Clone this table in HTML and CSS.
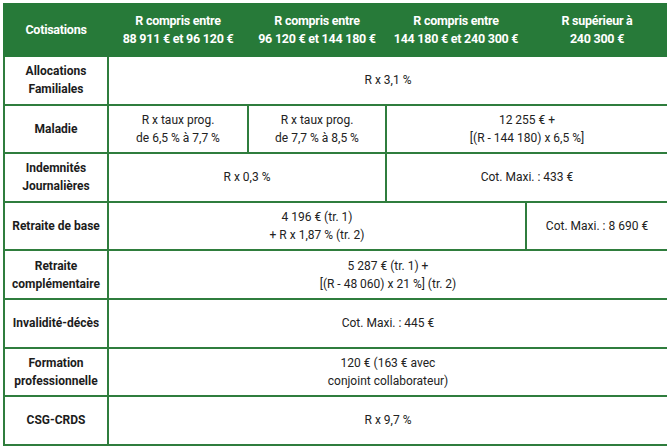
FILE: index.html
```html
<!DOCTYPE html>
<html lang="fr">
<head>
<meta charset="utf-8">
<link rel="stylesheet" href="styles.css">
</head>
<body>
<table class="grid">
  <colgroup>
    <col class="c1"><col class="c2"><col class="c3"><col class="c4"><col class="c5">
  </colgroup>
  <thead>
    <tr class="head">
      <th>Cotisations</th>
      <th>R compris entre<br>88 911 € et 96 120 €</th>
      <th>R compris entre<br>96 120 € et 144 180 €</th>
      <th>R compris entre<br>144 180 € et 240 300 €</th>
      <th>R supérieur à<br>240 300 €</th>
    </tr>
  </thead>
  <tbody>
    <tr>
      <th>Allocations<br>Familiales</th>
      <td colspan="4">R x 3,1 %</td>
    </tr>
    <tr>
      <th>Maladie</th>
      <td>R x taux prog.<br>de 6,5 % à 7,7 %</td>
      <td>R x taux prog.<br>de 7,7 % à 8,5 %</td>
      <td colspan="2">12 255 € +<br>[(R - 144 180) x 6,5 %]</td>
    </tr>
    <tr>
      <th>Indemnités<br>Journalières</th>
      <td colspan="2">R x 0,3 %</td>
      <td colspan="2">Cot. Maxi. : 433 €</td>
    </tr>
    <tr>
      <th>Retraite de base</th>
      <td colspan="3">4 196 € (tr. 1)<br>+ R x 1,87 % (tr. 2)</td>
      <td>Cot. Maxi. : 8 690 €</td>
    </tr>
    <tr>
      <th>Retraite<br>complémentaire</th>
      <td colspan="4">5 287 € (tr. 1) +<br>[(R - 48 060) x 21 %] (tr. 2)</td>
    </tr>
    <tr>
      <th>Invalidité-décès</th>
      <td colspan="4">Cot. Maxi. : 445 €</td>
    </tr>
    <tr>
      <th>Formation<br>professionnelle</th>
      <td colspan="4">120 € (163 € avec<br>conjoint collaborateur)</td>
    </tr>
    <tr>
      <th>CSG-CRDS</th>
      <td colspan="4">R x 9,7 %</td>
    </tr>
  </tbody>
</table>
</body>
</html>
```
FILE: styles.css
```css
html, body {
  background: #ffffff;
}
body {
  margin: 3px;
  font-family: Roboto, "Liberation Sans", sans-serif;
}
.grid {
  border-collapse: collapse;
  table-layout: fixed;
  width: 664px;
  font-size: 12px;
  line-height: 18px;
  color: #222;
}
.c1 { width: 104px; }
.c2 { width: 140px; }
.c3 { width: 138px; }
.c4 { width: 140px; }
.c5 { width: 142px; }
.grid th, .grid td {
  border: 2px solid #2f7d3d;
  text-align: center;
  vertical-align: middle;
  padding: 0 2px;
  white-space: nowrap;
}
.grid tbody tr {
  height: 48.6px;
}
.grid tbody th {
  font-weight: 700;
  color: #1c1c1c;
}
.head {
  height: 52px;
}
.head th {
  background: #277a39;
  color: #ffffff;
  font-weight: 700;
  font-size: 12.5px;
  letter-spacing: -0.25px;
  border-color: #277a39;
}
```
